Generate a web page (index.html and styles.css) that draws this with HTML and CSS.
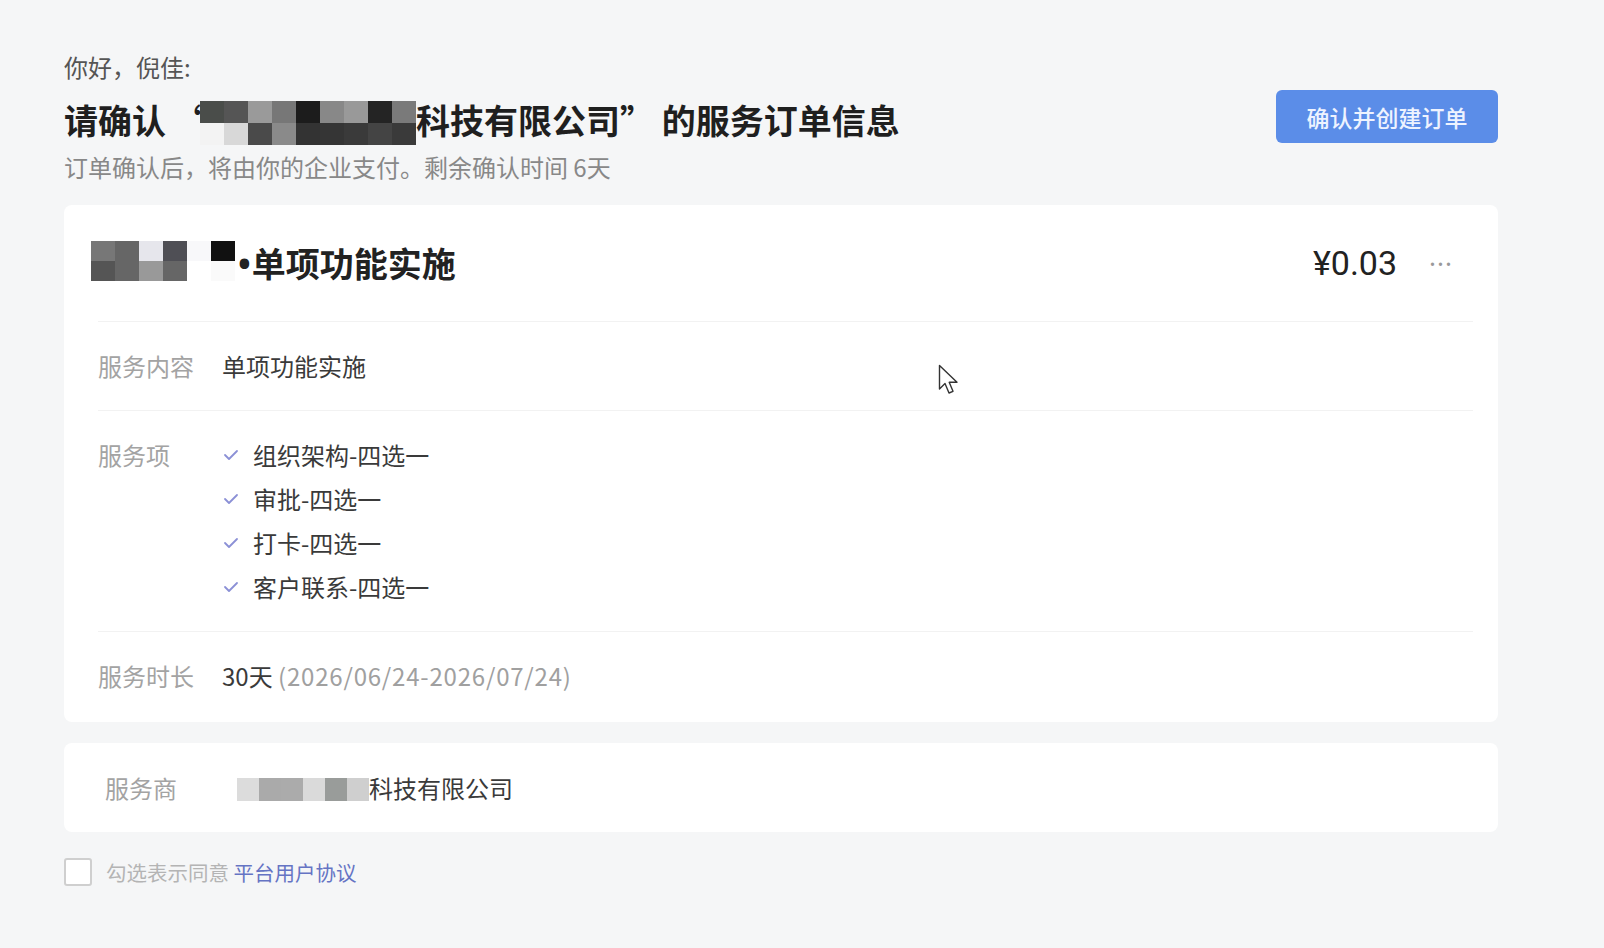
FILE: index.html
```html
<!DOCTYPE html>
<html lang="zh-CN">
<head>
    <meta charset="UTF-8">
    <meta name="viewport" content="width=device-width, initial-scale=1.0">
    <title>确认服务订单</title>
    <link rel="stylesheet" href="styles.css">
</head>
<body>
    <div class="page">
        <div class="greeting">你好，倪佳:</div>

        <div class="header">
            <div class="header-text">
                <h1 class="title">
                    请确认<span class="quote">“</span><span class="mosaic mosaic-title">
                        <i style="background:#4a4d4a"></i><i style="background:#555"></i><i style="background:#9a9a9a"></i><i style="background:#777"></i><i style="background:#1c1c1c"></i><i style="background:#888"></i><i style="background:#999"></i><i style="background:#242424"></i><i style="background:#7a7a7a"></i>
                        <i style="background:#f3f3f3"></i><i style="background:#d8d8d8"></i><i style="background:#4a4a4a"></i><i style="background:#8a8a8a"></i><i style="background:#333"></i><i style="background:#353535"></i><i style="background:#3a3a3a"></i><i style="background:#444"></i><i style="background:#3a3a3a"></i>
                    </span>科技有限公司” 的服务订单信息
                </h1>
                <p class="subtitle">订单确认后，将由你的企业支付。剩余确认时间 6天</p>
            </div>
            <button class="btn-primary">确认并创建订单</button>
        </div>

        <div class="card">
            <div class="card-head">
                <div class="product-name">
                    <span class="mosaic mosaic-head">
                        <i style="background:#777"></i><i style="background:#666"></i><i style="background:#e6e6ec"></i><i style="background:#4f4f55"></i><i style="background:#f8f8fa"></i><i style="background:#111"></i>
                        <i style="background:#555"></i><i style="background:#666"></i><i style="background:#999"></i><i style="background:#666"></i><i style="background:#fff"></i><i style="background:#fafafa"></i>
                    </span><span class="dot">•</span><span>单项功能实施</span>
                </div>
                <div class="price">¥0.03</div>
                <div class="more">···</div>
            </div>

            <div class="row">
                <div class="label">服务内容</div>
                <div class="value">单项功能实施</div>
            </div>

            <div class="row">
                <div class="label">服务项</div>
                <ul class="items">
                    <li><svg class="check" viewBox="0 0 16 12"><path d="M2 6 L6 10 L14 2" /></svg>组织架构-四选一</li>
                    <li><svg class="check" viewBox="0 0 16 12"><path d="M2 6 L6 10 L14 2" /></svg>审批-四选一</li>
                    <li><svg class="check" viewBox="0 0 16 12"><path d="M2 6 L6 10 L14 2" /></svg>打卡-四选一</li>
                    <li><svg class="check" viewBox="0 0 16 12"><path d="M2 6 L6 10 L14 2" /></svg>客户联系-四选一</li>
                </ul>
            </div>

            <div class="row">
                <div class="label">服务时长</div>
                <div class="value">30天 <span class="muted">(2026/06/24-2026/07/24)</span></div>
            </div>
        </div>

        <div class="card card-provider">
            <div class="label">服务商</div>
            <div class="value">
                <span class="mosaic mosaic-provider">
                    <i style="background:#dcdcdc"></i><i style="background:#aaa"></i><i style="background:#ababab"></i><i style="background:#dadada"></i><i style="background:#999c9a"></i><i style="background:#cfcfcf"></i>
                </span>科技有限公司
            </div>
        </div>

        <label class="agree">
            <span class="checkbox"></span>
            <span>勾选表示同意 <a href="#" class="link">平台用户协议</a></span>
        </label>
    </div>

    <!-- mouse pointer in the capture -->
    <svg class="cursor" viewBox="0 0 22 34" width="22" height="34">
        <path d="M1.5 1.5 L1.5 25 L7 19.5 L11 29 L15 27.3 L11.2 18.3 L19 18.3 Z" fill="#fff" stroke="#333" stroke-width="1.4" stroke-linejoin="round"/>
    </svg>
</body>
</html>
```

FILE: styles.css
```css
* {
    box-sizing: border-box;
}
body {
    margin: 0;
    background-color: #f5f6f7;
    font-family: "Noto Sans CJK SC", "Noto Sans", sans-serif;
    color: #333;
}
.page {
    width: 1498px;
    padding: 51px 0 40px 64px;
}
.greeting {
    font-size: 24px;
    line-height: 32px;
    color: #555;
}
.header {
    display: flex;
    justify-content: space-between;
    align-items: flex-start;
}
.title {
    margin: 14px 0 0;
    font-size: 34px;
    line-height: 46px;
    font-weight: 700;
    color: #1f1f1f;
    white-space: nowrap;
}
.quote {
    margin-left: 8px;
}
.subtitle {
    margin: 3px 0 0;
    font-size: 24px;
    line-height: 34px;
    color: #888;
}
.btn-primary {
    margin-top: 7px;
    width: 222px;
    height: 53px;
    border: none;
    border-radius: 6px;
    background-color: #5b8de8;
    color: #eef3ff;
    font-family: inherit;
    font-size: 23px;
    font-weight: 500;
    cursor: pointer;
}

/* pixelated (masked) names */
.mosaic {
    display: inline-grid;
    vertical-align: middle;
}
.mosaic i {
    display: block;
}
.mosaic-title {
    grid-template-columns: repeat(9, 24px);
    grid-auto-rows: 22px;
    margin: 0 0 0 -8px;
    position: relative;
    top: -2px;
}
.mosaic-head {
    grid-template-columns: repeat(6, 24px);
    grid-auto-rows: 20px;
    margin-top: -4px;
}
.mosaic-provider {
    grid-template-columns: repeat(6, 22px);
    grid-auto-rows: 23px;
    margin-left: 4px;
    position: relative;
    top: -2px;
}

.card {
    background-color: #fff;
    border-radius: 8px;
    margin-top: 21px;
    padding-bottom: 2px;
}
.card-head {
    display: flex;
    align-items: center;
    height: 116px;
    padding: 0 45px 0 27px;
}
.product-name {
    flex: 1;
    display: flex;
    align-items: center;
    font-size: 34px;
    font-weight: 700;
    color: #222;
}
.dot {
    font-family: "Noto Sans", sans-serif;
    margin: 0 1px 0 3px;
}
.price {
    font-family: Roboto, "Noto Sans", sans-serif;
    font-size: 34px;
    font-weight: 400;
    color: #222;
}
.more {
    margin-left: 32px;
    font-family: "Noto Sans", sans-serif;
    font-size: 26px;
    color: #999;
    letter-spacing: 1px;
}
.row {
    display: flex;
    margin: 0 25px 0 34px;
    padding: 22px 0;
    line-height: 44px;
    font-size: 24px;
    border-top: 1px solid #f2f2f2;
}
.label {
    width: 124px;
    flex-shrink: 0;
    color: #a3a3a3;
}
.value {
    color: #3a3a3a;
}
.muted {
    color: #a0a0a0;
    letter-spacing: 0.8px;
}
.items {
    list-style: none;
    margin: 0;
    padding: 0;
    color: #3a3a3a;
}
.items li {
    display: flex;
    align-items: center;
}
.check {
    width: 16px;
    height: 12px;
    margin: 0 14px 0 1px;
}
.check path {
    fill: none;
    stroke: #8b90d6;
    stroke-width: 1.8;
    stroke-linecap: round;
    stroke-linejoin: round;
}

.card-provider {
    display: flex;
    align-items: center;
    height: 89px;
    padding: 0 0 0 41px;
    font-size: 24px;
}
.card-provider .label {
    width: 128px;
}

.agree {
    display: flex;
    align-items: center;
    gap: 14px;
    margin-top: 25px;
    font-size: 20.5px;
    color: #b4b4b4;
}
.checkbox {
    width: 28px;
    height: 28px;
    border: 2px solid #cfcfcf;
    border-radius: 3px;
    background-color: #fff;
}
.link {
    color: #6574c4;
    text-decoration: none;
}

.cursor {
    position: absolute;
    left: 938px;
    top: 364px;
}
```
